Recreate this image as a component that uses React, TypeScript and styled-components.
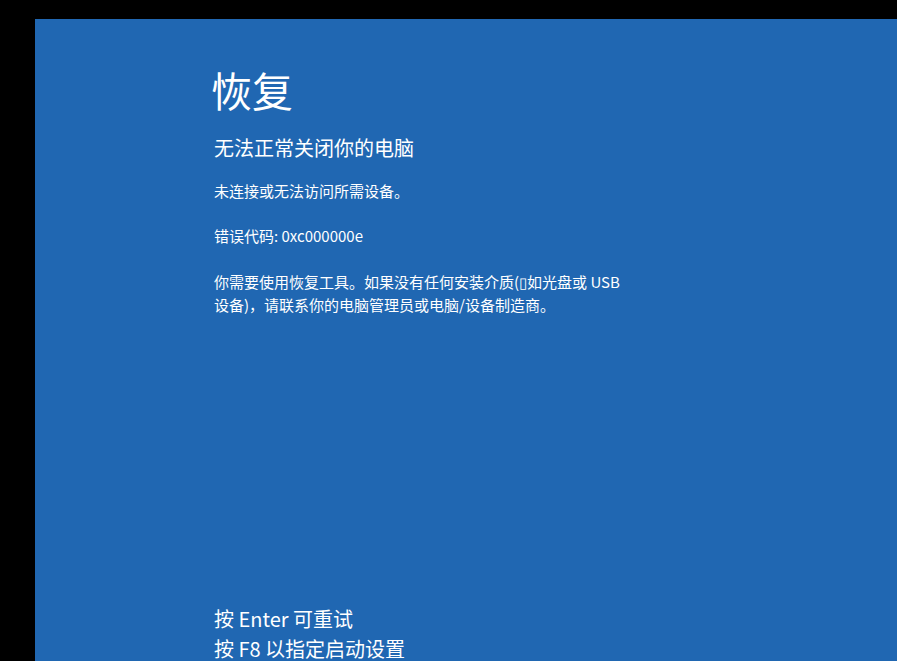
import React from "react";
import styled, { createGlobalStyle } from "styled-components";

const GlobalStyle = createGlobalStyle`
  html, body {
    margin: 0;
    padding: 0;
    background: #000000;
    overflow: hidden;
  }
  #root {
    height: 661px;
  }
`;

const Screen = styled.div`
  height: 661px;
  padding: 19px 0 0 35px;
  box-sizing: border-box;
  background: #000000;
  overflow: hidden;
`;

const Panel = styled.main`
  height: 100%;
  background: #2067b2;
  color: #ffffff;
  font-family: "Noto Sans CJK SC", "Noto Sans", sans-serif;
  display: flex;
  flex-direction: column;
  padding: 45px 0 0 179px;
  box-sizing: border-box;
`;

const Title = styled.h1`
  margin: 0 0 0 -3px;
  font-size: 41px;
  line-height: 50px;
  font-weight: 400;
`;

const Subtitle = styled.h2`
  margin: 20px 0 0 0;
  font-size: 20px;
  line-height: 28px;
  font-weight: 400;
`;

const Para = styled.p<{ $gap: number }>`
  margin: ${(p) => p.$gap}px 0 0 0;
  font-size: 15px;
  line-height: 23px;
  font-weight: 400;
`;

const Footer = styled.div`
  margin-top: auto;
  margin-bottom: -3px;
  font-size: 20px;
  line-height: 30px;
`;

const Hint = styled.div``;

export default function App() {
  return (
    <>
      <GlobalStyle />
      <Screen>
        <Panel>
          <Title>恢复</Title>
          <Subtitle>无法正常关闭你的电脑</Subtitle>
          <Para $gap={17}>未连接或无法访问所需设备。</Para>
          <Para $gap={22}>错误代码: 0xc000000e</Para>
          <Para $gap={23}>
            你需要使用恢复工具。如果没有任何安装介质(▯如光盘或 USB
            <br />
            设备)，请联系你的电脑管理员或电脑/设备制造商。
          </Para>
          <Footer>
            <Hint>按 Enter 可重试</Hint>
            <Hint>按 F8 以指定启动设置</Hint>
          </Footer>
        </Panel>
      </Screen>
    </>
  );
}
